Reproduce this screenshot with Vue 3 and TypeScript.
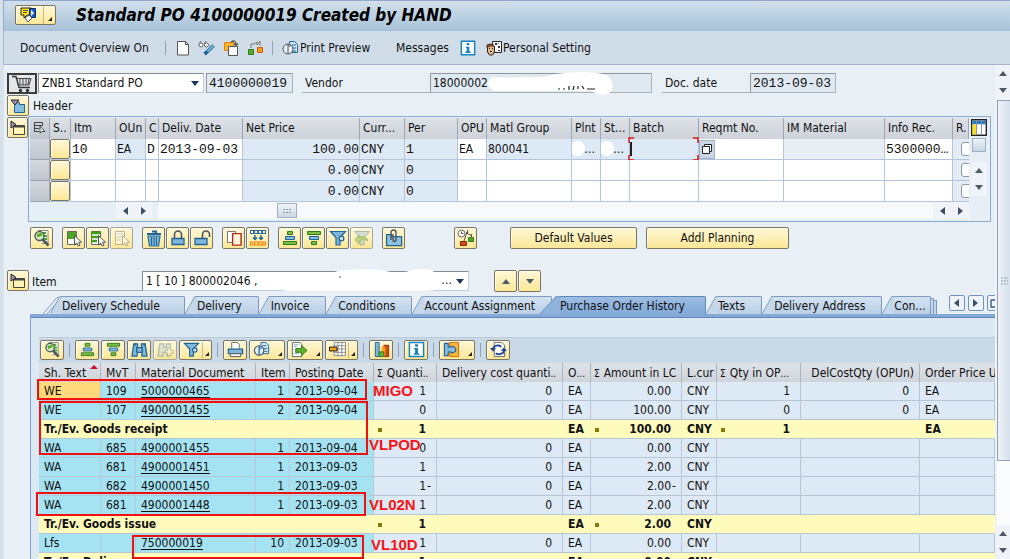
<script setup lang="ts">
import { ref } from 'vue'

interface Tool { icon: string; label: string; menu?: boolean; wide?: boolean; off?: boolean }
interface Cell { text?: string; kind: string }
interface HistoryRow {
  text: string; mvt: string; doc: string; item: string; date: string
  qty: string; cost: string; unit: string; amount: string; cur: string
  opu: string; dcq: string; price: string
}
interface SumRow { sum: true; text: string; qty: string; unit: string; amount: string; cur: string; opu: string; price: string }

const docType = ref('ZNB1 Standard PO')
const docNumber = ref('4100000019')
const vendor = ref('18000002')
const docDate = ref('2013-09-03')

const itemCols = [
  { key: 's', label: 'S..' }, { key: 'itm', label: 'Itm' }, { key: 'oun', label: 'OUn' }, { key: 'c', label: 'C' },
  { key: 'date', label: 'Deliv. Date' }, { key: 'net', label: 'Net Price' }, { key: 'curr', label: 'Curr...' },
  { key: 'per', label: 'Per' }, { key: 'opu', label: 'OPU' }, { key: 'matl', label: 'Matl Group' },
  { key: 'plnt', label: 'Plnt' }, { key: 'st', label: 'St...' }, { key: 'batch', label: 'Batch' },
  { key: 'req', label: 'Reqmt No.' }, { key: 'im', label: 'IM Material' }, { key: 'info', label: 'Info Rec.' },
  { key: 'r', label: 'R.' },
]
const emptyRow = (): Cell[] => [
  { kind: 'status' }, { kind: 'edit' }, { kind: 'edit' }, { kind: 'edit' }, { kind: 'edit' },
  { kind: 'read num', text: '0.00' }, { kind: 'read mono', text: 'CNY' }, { kind: 'read mono', text: '0' },
  { kind: 'edit' }, { kind: 'edit' }, { kind: 'edit' }, { kind: 'edit' }, { kind: 'edit' }, { kind: 'edit' },
  { kind: 'edit' }, { kind: 'edit' }, { kind: 'check' },
]
const itemRows: Cell[][] = [
  [
    { kind: 'status' }, { kind: 'edit mono', text: '10' }, { kind: 'read', text: 'EA' }, { kind: 'edit mono', text: 'D' },
    { kind: 'edit mono', text: '2013-09-03' }, { kind: 'read num', text: '100.00' }, { kind: 'read mono', text: 'CNY' },
    { kind: 'read mono', text: '1' }, { kind: 'edit', text: 'EA' }, { kind: 'read', text: '800041' },
    { kind: 'read smudge', text: '…' }, { kind: 'read smudge', text: '…' }, { kind: 'read focus' },
    { kind: 'help' }, { kind: 'read pale' }, { kind: 'edit mono', text: '5300000…' }, { kind: 'check' },
  ],
  emptyRow(),
  emptyRow(),
]

const itemTools: Tool[][] = [
  [{ icon: 'detail', label: 'Details' }],
  [{ icon: 'selall', label: 'Select all' }, { icon: 'selblock', label: 'Select block' }, { icon: 'desel', label: 'Deselect', off: true }],
  [{ icon: 'trash', label: 'Delete' }, { icon: 'lock', label: 'Lock' }, { icon: 'unlock', label: 'Unlock' }],
  [{ icon: 'copy', label: 'Copy' }, { icon: 'insert', label: 'Insert' }],
  [{ icon: 'asc', label: 'Sort ascending' }, { icon: 'desc', label: 'Sort descending' }, { icon: 'filter', label: 'Filter' }, { icon: 'unfilter', label: 'Remove filter', off: true }],
  [{ icon: 'attach', label: 'Attachments' }],
]
const historyTools: Tool[][] = [
  [{ icon: 'detail', label: 'Details' }],
  [{ icon: 'asc', label: 'Sort ascending' }, { icon: 'desc', label: 'Sort descending' }, { icon: 'find', label: 'Find' }, { icon: 'findnext', label: 'Find next', off: true }, { icon: 'filter', label: 'Filter', menu: true }],
  [{ icon: 'print', label: 'Print' }, { icon: 'view', label: 'Views', menu: true, wide: true }, { icon: 'export', label: 'Export', menu: true, wide: true }, { icon: 'layout', label: 'Layout', menu: true }],
  [{ icon: 'chart', label: 'Graphic' }],
  [{ icon: 'info', label: 'Information' }],
  [{ icon: 'plug', label: 'Services', menu: true, wide: true }],
  [{ icon: 'refresh', label: 'Refresh' }],
]

const tabs = ['Delivery Schedule', 'Delivery', 'Invoice', 'Conditions', 'Account Assignment', 'Purchase Order History', 'Texts', 'Delivery Address', 'Con...']
const activeTab = ref('Purchase Order History')

const r = (text: string, mvt: string, doc: string, item: string, date: string, qty: string, amount: string, opu = '', dcq = '', price = ''): HistoryRow =>
  ({ text, mvt, doc, item, date, qty, cost: '0', unit: 'EA', amount, cur: 'CNY', opu, dcq, price })

const history: (HistoryRow | SumRow)[] = [
  r('WE', '109', '5000000465', '1', '2013-09-04', '1', '0.00', '1', '0', 'EA'),
  r('WE', '107', '4900001455', '2', '2013-09-04', '0', '100.00', '0', '0', 'EA'),
  { sum: true, text: 'Tr./Ev. Goods receipt', qty: '1', unit: 'EA', amount: '100.00', cur: 'CNY', opu: '1', price: 'EA' },
  r('WA', '685', '4900001455', '1', '2013-09-04', '0', '0.00'),
  r('WA', '681', '4900001451', '1', '2013-09-03', '1', '2.00'),
  r('WA', '682', '4900001450', '1', '2013-09-03', '1-', '2.00-'),
  r('WA', '681', '4900001448', '1', '2013-09-03', '1', '2.00'),
  { sum: true, text: 'Tr./Ev. Goods issue', qty: '1', unit: 'EA', amount: '2.00', cur: 'CNY', opu: '', price: '' },
  r('Lfs', '', '750000019', '10', '2013-09-03', '1', '0.00'),
  { sum: true, text: 'Tr./Ev. Delivery note', qty: '1', unit: 'EA', amount: '0.00', cur: 'CNY', opu: '', price: '' },
]
const digits = (v: string) => v.replace('-', '')
const sign = (v: string) => (v.endsWith('-') ? '-' : '')
</script>

<template>
  <div class="window">
    <svg class="sprite" aria-hidden="true">
      <symbol id="i-detail" viewBox="0 0 18 18"><path d="M5 1.500h10v13h-6" fill="#fff" stroke="#8a8a7a"/><path d="M9 4h4M9 7h5M10 10h4M11 13h3" stroke="#48a51c" stroke-width="2"/><circle cx="6.500" cy="7" r="4.500" fill="#d9efc6" stroke="#4f5960" stroke-width="1.400"/><path d="M4 7l5-2" stroke="#58ac27" stroke-width="3"/><path d="M9.500 10.500l6 6" stroke="#4f5960" stroke-width="2.600"/></symbol>
      <symbol id="i-selall" viewBox="0 0 18 18"><path d="M2.500 2.500h9v13h-9z" fill="#fff" stroke="#666"/><path d="M3 3h8v7h-8z" fill="#4da525"/><path d="M9.500 6.500v9.500l2.300-2 1.500 3 1.700-.8-1.400-3h3z" fill="#fff" stroke="#555"/></symbol>
      <symbol id="i-selblock" viewBox="0 0 18 18"><path d="M2.500 2.500h9v13h-9z" fill="#fff" stroke="#666"/><path d="M2 4h10M2 8h8M2 12h6" stroke="#3f9d1c" stroke-width="2.400"/><path d="M9.500 6.500v9.500l2.300-2 1.500 3 1.700-.8-1.400-3h3z" fill="#fff" stroke="#555"/></symbol>
      <symbol id="i-desel" viewBox="0 0 18 18"><path d="M2.500 2.500h9v13h-9z" fill="#fff" stroke="#777"/><path d="M4 5h6M4 8h5M4 11h4" stroke="#999"/><path d="M9.500 6.500v9.500l2.300-2 1.500 3 1.700-.8-1.400-3h3z" fill="#fff" stroke="#777"/></symbol>
      <symbol id="i-trash" viewBox="0 0 18 18"><path d="M3 7h12l-1.500 10h-9z" fill="#8fc1e0" stroke="#1f6697" stroke-width="1.200"/><path d="M2 5h14M7 2.500h4v2" fill="none" stroke="#1f6697" stroke-width="2"/><path d="M6.500 8v8M9 8v8M11.500 8v8" stroke="#1f6697" stroke-width="1.200"/></symbol>
      <symbol id="i-lock" viewBox="0 0 18 18"><path d="M5.500 9V5.500a3.500 3.500 0 0 1 7 0V9" fill="none" stroke="#4c555b" stroke-width="1.600"/><path d="M3 9.500h12v6h-12z" fill="#7fb6da" stroke="#1f6697" stroke-width="1.300"/></symbol>
      <symbol id="i-unlock" viewBox="0 0 18 18"><path d="M9.500 9V5.500a3.500 3.500 0 0 1 7 0V8" fill="none" stroke="#4c555b" stroke-width="1.600"/><path d="M2 9.500h12v6h-12z" fill="#7fb6da" stroke="#1f6697" stroke-width="1.300"/></symbol>
      <symbol id="i-copy" viewBox="0 0 18 18"><path d="M2.500 2.500h8v11h-8z" fill="#fff" stroke="#777"/><path d="M7.600 4.600h8.500v11.500h-8.500z" fill="#fff4dc" stroke="#b02c17" stroke-width="1.400"/></symbol>
      <symbol id="i-insert" viewBox="0 0 18 18"><path d="M1 1h16v4h-16z" fill="#2f6c9c"/><path d="M2 3h15" stroke="#fff" stroke-width="2" stroke-dasharray="2 2"/><path d="M6 6v5M12 6v5M4 8.500l2 2 2-2M10 8.500l2 2 2-2" fill="none" stroke="#1f6697" stroke-width="1.400"/><path d="M1 12.500h16v4h-16z" fill="#ee7d10"/><path d="M2 14.500h14" stroke="#ffd668" stroke-width="2" stroke-dasharray="3 1"/></symbol>
      <symbol id="i-asc" viewBox="0 0 18 18"><path d="M6.500 2.500h5v3h-5z" fill="#78bf43" stroke="#317d1c"/><path d="M4.500 7.500h9v3h-9z" fill="#82bce0" stroke="#1f6697"/><path d="M2.500 12.500h13v3h-13z" fill="#78bf43" stroke="#317d1c"/></symbol>
      <symbol id="i-desc" viewBox="0 0 18 18"><path d="M2.500 2.500h13v3h-13z" fill="#78bf43" stroke="#317d1c"/><path d="M4.500 7.500h9v3h-9z" fill="#82bce0" stroke="#1f6697"/><path d="M6.500 12.500h5v3h-5z" fill="#78bf43" stroke="#317d1c"/></symbol>
      <symbol id="i-filter" viewBox="0 0 18 18"><path d="M1.500 2.500h15l-5.500 6v7.500h-4v-7.500z" fill="#7fb6da" stroke="#1f6697" stroke-width="1.200"/><circle cx="12.500" cy="9.500" r="2.300" fill="#dbeaf4" stroke="#1f6697" stroke-width="1.300"/></symbol>
      <symbol id="i-unfilter" viewBox="0 0 18 18"><path d="M1.500 2.500h15l-5.500 6v7.500h-4v-7.500z" fill="#a8c7dc" stroke="#52819f"/><path d="M2 11l4-5v3c4-3 8-1 9 3-3-2-6-2-9 0v3z" fill="#84b65b" stroke="#4b8731"/></symbol>
      <symbol id="i-attach" viewBox="0 0 18 18"><path d="M1.600 5.600h5v2h10v9h-15z" fill="#8fc1e0" stroke="#1f6697" stroke-width="1.300"/><path d="M6 11V3.500a2.500 2.500 0 0 1 5 0V11a1.500 1.500 0 0 1-3 0V5" fill="none" stroke="#4c555b" stroke-width="1.400"/></symbol>
      <symbol id="i-balance" viewBox="0 0 18 18"><circle cx="4.500" cy="4.500" r="3.500" fill="#fff" stroke="#666"/><path d="M4.500 2.500v2h2M9 3.500l5 3M14.500 5v4M10 3l-3 9M10.500 1v4" fill="none" stroke="#555"/><path d="M11.500 8.500h5v4h-5z" fill="#4da525" stroke="#317d1c"/><path d="M3.500 12.500h6v4h-6z" fill="#d34a16" stroke="#94290d"/></symbol>
      <symbol id="i-find" viewBox="0 0 18 18"><path d="M3 3h4v4h4V3h4l2 13h-5.500v-4h-5v4H1z" fill="#7fb6da" stroke="#1f6697" stroke-width="1.300"/><path d="M6 6v6M12 6v6M4 2v3M14 2v3" stroke="#1f6697" stroke-width="1.500"/></symbol>
      <symbol id="i-findnext" viewBox="0 0 18 18"><path d="M3 3h4v4h3V3h4v13h-3.500v-4h-4v4H1z" fill="#c2d5df" stroke="#648ba3" stroke-width="1.300"/><path d="M13 7v9M8.500 11.500h9" stroke="#78916f" stroke-width="4"/><path d="M13 8v7M9.500 11.500h7" stroke="#fff" stroke-width="2"/></symbol>
      <symbol id="i-print" viewBox="0 0 18 18"><path d="M5 8V1.500h6l2 2V8" fill="#fff" stroke="#5c6970"/><path d="M1.500 8.500h15v5h-15z" fill="#7fb6da" stroke="#1f6697" stroke-width="1.300"/><path d="M3.500 13.500h11v3h-11z" fill="#fff" stroke="#4c555b"/></symbol>
      <symbol id="i-view" viewBox="0 0 18 18"><path d="M8.500 1.500h5l3 3v9h-8z" fill="#d2e7f5" stroke="#1f6697"/><path d="M10 5h4M11 8h4M12 11h3" stroke="#1f6697"/><circle cx="6.500" cy="10" r="5" fill="#e6f0f6" stroke="#4c555b" stroke-width="1.200"/><path d="M6.500 5v10M6.500 7.500h3" stroke="#2575a9" stroke-width="1.500"/></symbol>
      <symbol id="i-export" viewBox="0 0 18 18"><path d="M1.500 1.500h8l2 2v13h-10z" fill="#fff" stroke="#5c6970"/><path d="M3 4h5M3 6h3M3 13h5" stroke="#8ba0ad"/><path d="M5 8h6V4.500l6 5.500-6 5.500V12H5z" fill="#61b02b" stroke="#317d1c"/></symbol>
      <symbol id="i-layout" viewBox="0 0 18 18"><path d="M5.500 1.500h12v14h-12z" fill="#fff" stroke="#8a8a8a"/><path d="M9.500 1v15M13.500 1v15M5 5h13M5 8.500h13M5 12h13" stroke="#8a8a8a"/><path d="M.5 6.500h8v4h-8z" fill="#f7a51b" stroke="#111"/></symbol>
      <symbol id="i-chart" viewBox="0 0 18 18"><path d="M2.500 1.500h4v15h-4z" fill="#7fb6da" stroke="#1f6697"/><path d="M11.500 4.500h5v12h-5z" fill="#d94817" stroke="#942d0b"/><path d="M9 6h4v10h-4z" fill="#f3ab18"/><path d="M6.500 11.500h5v5h-5z" fill="#66ae38" stroke="#317d1c"/></symbol>
      <symbol id="i-info" viewBox="0 0 18 18"><path d="M1.500 1.500h15v15h-15z" fill="#fff" stroke="#1583bd" stroke-width="1.600"/><path d="M7.500 3.500h3v2.500h-3zM6.500 7.500h4v5.500h1.500v1.500h-6v-1.500h1.500v-4h-1z" fill="#1583bd"/></symbol>
      <symbol id="i-plug" viewBox="0 0 18 18"><path d="M7 1.500h9.500v15H7v-4h4v-7H7z" fill="#f9b33a" stroke="#c96d0a"/><path d="M1.500 2.500h4v4h2c4-2 6 1 6 3s-3 4-6 2h-2v4h-4z" fill="#83bddf" stroke="#1f6697" stroke-width="1.200"/></symbol>
      <symbol id="i-refresh" viewBox="0 0 18 18"><path d="M4.500 1.500h8l3 3v12h-11z" fill="#fff" stroke="#666"/><path d="M3 8a5.500 4.500 0 0 1 9-2M15 10a5.500 4.500 0 0 1-9 3" fill="none" stroke="#24479b" stroke-width="2"/><path d="M0 7.500h6.500l-3.300 4zM18 10.500h-6.500l3.300-4z" fill="#24479b"/></symbol>
      <symbol id="i-open" viewBox="0 0 16 16"><path d="M3.500 5.500h11v9h-11z" fill="#fff3b8" stroke="#444"/><path d="M3 6.500h12" stroke="#444" stroke-width="2"/><path d="M1 1l5 3.500-5 3.500z" fill="#a891b5" stroke="#222"/></symbol>
    </svg>

    <header class="titlebar">
      <button class="btn menu-btn" aria-label="Services for object">
        <svg width="18" height="16" viewBox="0 0 18 16"><path d="M2 1h10v7H8l-3 3V8H2z" fill="#ffe51a" stroke="#222"/><path d="M4 3.500h5M4 5.500h4" stroke="#555"/><path d="M10.500 1.500h6v9h-6z" fill="#1c5fc2" stroke="#0b2d70"/><path d="M12 3l3 3-3 3z" fill="#fff"/><path d="M6 11l4-3 3 3-4 4z" fill="#fff" stroke="#555"/></svg>
        <i class="split"></i><i class="corner"></i>
      </button>
      <h1>Standard PO 4100000019 Created by HAND</h1>
    </header>

    <nav class="appbar">
      <button class="flat overview">Document Overview On</button>
      <i class="bar"></i>
      <button class="flat ic" aria-label="Create"><svg width="16" height="16" viewBox="0 0 16 16"><path d="M2.500 1.500h8l3 3v10.500h-11z" fill="#fff" stroke="#555"/><path d="M10.500 1.500v3h3" fill="none" stroke="#555"/></svg></button>
      <button class="flat ic" aria-label="Display/Change"><svg width="18" height="16" viewBox="0 0 18 16"><path d="M1 4l2-3M6 4l2-3" stroke="#666" fill="none"/><circle cx="3" cy="5" r="2" fill="#fff" stroke="#666"/><circle cx="8.500" cy="5" r="2" fill="#fff" stroke="#666"/><path d="M15.500 5.500l-7 7-2 1.500" stroke="#1d5f91" stroke-width="3.500"/><path d="M15.500 5.500l-6 6" stroke="#74b6e2" stroke-width="2"/></svg></button>
      <button class="flat ic" aria-label="Other purchase order"><svg width="16" height="16" viewBox="0 0 16 16"><path d="M1.500 2.500h9v8h-9z" fill="#fbb62c" stroke="#dd8410"/><path d="M5.500 6.500h9v9h-9z" fill="#fff" stroke="#555"/><path d="M8 2c3-2 5-1 5 3M11 3.500l2 2 2-2" fill="none" stroke="#555" stroke-width="1.300"/></svg></button>
      <button class="flat ic" aria-label="Check"><svg width="16" height="16" viewBox="0 0 16 16"><path d="M1.500 9.500h5v5h-5z" fill="#56aa30" stroke="#317d1c"/><path d="M10.500 7.500h5v5h-5z" fill="#f79a1d" stroke="#cf6507"/><path d="M4 8V4h3l3-2v3l3-4v5" fill="none" stroke="#777"/></svg></button>
      <i class="bar"></i>
      <button class="flat preview"><svg width="17" height="16" viewBox="0 0 17 16"><path d="M7.500 1.500h5l3 3v8h-8z" fill="#d2e7f5" stroke="#1f6697"/><path d="M10 5h4M10 8h4M10 11h4" stroke="#1f6697"/><circle cx="6" cy="9" r="5" fill="#e6f0f6" stroke="#4c555b"/><path d="M6 4v10M6 6h3" stroke="#555"/></svg>Print Preview</button>
      <button class="flat messages">Messages</button>
      <button class="flat ic" aria-label="Help"><svg width="16" height="16"><use href="#i-info" /></svg></button>
      <button class="flat personal"><svg width="16" height="16" viewBox="0 0 16 16"><path d="M6.500 1.500h9v11h-9z" fill="#fff" stroke="#222"/><path d="M9 3h2v2H9zM12 6h2v2h-2zM12 3h1v1h-1zM12 10h2v1h-2z" fill="#333"/><path d="M1.500 6h7v6l-2 3h-3l-2-3z" fill="#e5b88b" stroke="#222"/><path d="M1 8V5l3-1 4 1" fill="#8a5429" stroke="#4b2b15"/><path d="M3 8.500h1M6 8.500h1M4 11.500h2" stroke="#222"/></svg>Personal Setting</button>
    </nav>

    <div class="body">
      <main class="content">
        <section class="docline">
          <span class="cart"><svg width="22" height="18" viewBox="0 0 22 18"><path d="M1 1.500h4l3 11h11" fill="none" stroke="#333" stroke-width="1.500"/><path d="M5 3.500h15l-2 6.500H7M9 3.500v6.500M12 3.500v6.500M15 3.500v6.500M18 3.500l-1 6.500" fill="none" stroke="#444"/><circle cx="9.500" cy="15.500" r="1.700" fill="#333"/><circle cx="16.500" cy="15.500" r="1.700" fill="#333"/></svg></span>
          <span class="pick doctype">
            <select v-model="docType" aria-label="Document type"><option>ZNB1 Standard PO</option></select>
            <i class="tri down"></i>
          </span>
          <input v-model="docNumber" class="field mono number" aria-label="Document number" readonly />
          <label class="cap vendor-cap" for="vendor">Vendor</label>
          <span class="vendor-wrap">
            <input id="vendor" v-model="vendor" class="field" readonly />
            <svg class="blot" width="130" height="24" viewBox="0 0 130 24"><path d="M6 5C20 6 48 5 58 5C70 0 100-1 116 2C128 5 128 20 120 22C113 24 108 21 105 19H10C-1 18-1 7 6 5z" fill="#fff"/><path d="M71 17h2M76 17h2M82 14v4M87 14l-1 4M91 14v3M95 14l2 3M100 17h8" stroke="#222" stroke-width="1.200"/></svg>
          </span>
          <label class="cap date-cap" for="docdate">Doc. date</label>
          <input id="docdate" v-model="docDate" class="field mono date" readonly />
        </section>

        <section class="headrow">
          <button class="btn toggle" aria-label="Expand header"><svg width="16" height="16" viewBox="0 0 16 16"><path d="M4.500 7.500V4.500h5v2h5v8h-10z" fill="#84bde0" stroke="#1f6697"/><path d="M1 2h8L5 7z" fill="#a891b5" stroke="#222"/></svg></button>
          <span>Header</span>
        </section>

        <section class="overview-row">
          <button class="btn toggle" aria-label="Collapse item overview"><svg width="16" height="16"><use href="#i-open" /></svg></button>
          <div class="grid-panel">
            <div class="grid-main">
              <table class="items">
                <colgroup><col class="c-mark" /><col v-for="c in itemCols" :key="c.key" :class="'c-' + c.key" /></colgroup>
                <thead>
                  <tr>
                    <th class="mark"><svg width="14" height="14" viewBox="0 0 14 14"><path d="M2 1.500h8.500v3H2M2 4.500h7M2 7.500h5M2 10.500h5M2.500 1v10" stroke="#444" fill="none"/><path d="M8 5v7l2-1.500h3z" fill="#fff" stroke="#444"/></svg></th>
                    <th v-for="c in itemCols" :key="c.key">{{ c.label }}</th>
                  </tr>
                </thead>
                <tbody>
                  <tr v-for="(row, i) in itemRows" :key="i">
                    <td class="mark"></td>
                    <td v-for="(cell, j) in row" :key="j" :class="cell.kind">
                      <button v-if="cell.kind === 'status'" class="btn status-btn" :aria-label="'Status of line ' + (i + 1)"></button>
                      <input v-else-if="cell.kind === 'check'" type="checkbox" class="box" :aria-label="'Returns item, line ' + (i + 1)" />
                      <button v-else-if="cell.kind === 'help'" class="f4" aria-label="Choose requirement number"><svg width="12" height="12" viewBox="0 0 12 12"><path d="M3.500 1.500h7v7h-7z" fill="#fff" stroke="#222"/><path d="M1.500 3.500h7v7h-7z" fill="#fff" stroke="#222"/></svg></button>
                      <template v-else-if="cell.kind === 'read smudge'"><i class="dab"></i><span>{{ cell.text }}</span></template>
                      <template v-else>
                        <input :value="cell.text" :aria-label="itemCols[j].label + ', line ' + (i + 1)" :readonly="cell.kind.startsWith('read')" />
                        <svg v-if="cell.kind === 'read focus'" class="frame" viewBox="0 0 71 24"><path d="M6 1H1v5M1 18v5h5M65 1h5v5M70 18v5h-5" fill="none" stroke="#e01515" stroke-width="1.500"/><path d="M3 5v14" stroke="#222" stroke-width="2"/></svg>
                      </template>
                    </td>
                  </tr>
                </tbody>
              </table>
              <div class="hscroll">
                <button class="arrow" aria-label="Scroll left"><i class="tri left"></i></button>
                <button class="arrow" aria-label="Scroll left one column"><i class="tri right"></i></button>
                <div class="track"><span class="hthumb"><svg width="8" height="6" viewBox="0 0 8 6"><path d="M0 1.500h8M0 4.500h8" stroke="#8b99a8" stroke-dasharray="2 1"/></svg></span></div>
                <button class="arrow" aria-label="Scroll right one column"><i class="tri left"></i></button>
                <button class="arrow" aria-label="Scroll right"><i class="tri right"></i></button>
              </div>
            </div>
            <div class="grid-side">
              <button class="config" aria-label="Table settings"><svg width="16" height="17" viewBox="0 0 16 17"><path d="M.7.700h14.600v15.600H.7z" fill="#fff" stroke="#222" stroke-width="1.400"/><path d="M1.400 3.500h13.200" stroke="#2a77bd" stroke-width="3.500"/><path d="M3.500 5.500v10" stroke="#f7e21c" stroke-width="4"/><path d="M5.500 2v14M10.500 2v14" stroke="#8a949c"/></svg></button>
              <i class="vmini"></i>
              <button class="arrow" aria-label="Scroll up"><i class="tri up"></i></button>
              <button class="arrow" aria-label="Scroll down"><i class="tri down grey"></i></button>
            </div>
          </div>
        </section>

        <section class="tools">
          <div v-for="(g, i) in itemTools" :key="i" class="group">
            <button v-for="t in g" :key="t.icon" class="btn tool" :class="{ off: t.off }" :aria-label="t.label"><svg width="18" height="18"><use :href="'#i-' + t.icon" /></svg></button>
          </div>
          <div class="group lone"><button class="btn tool" aria-label="Account balance"><svg width="18" height="18"><use href="#i-balance" /></svg></button></div>
          <button class="btn text-btn defaults">Default Values</button>
          <button class="btn text-btn planning">Addl Planning</button>
        </section>

        <section class="itemline">
          <button class="btn toggle" aria-label="Collapse item"><svg width="16" height="16"><use href="#i-open" /></svg></button>
          <label class="cap item-cap" for="item">Item</label>
          <span class="pick item-pick">
            <select id="item"><option>1 [ 10 ] 800002046 ,</option></select>
            <svg class="blot" width="176" height="24" viewBox="0 0 176 24"><path d="M2 6C40 4 58 5 65 2C85-1 110 0 121 4C135 5 140-2 152 0C165 0 160 8 170 10C172 20 166 22 150 22H15C0 21-3 12 2 6z" fill="#fff"/><path d="M67 7v2" stroke="#803a8f"/></svg>
            <span class="rest">…</span>
            <i class="tri down"></i>
          </span>
          <button class="btn tool step" aria-label="Previous item"><i class="tri up"></i></button>
          <button class="btn tool" aria-label="Next item"><i class="tri down grey"></i></button>
        </section>

        <div class="tabbar" role="tablist">
          <svg class="stack" width="18" height="18" viewBox="0 0 18 18"><path d="M0 18L14 1.500H18M4 18L17 3M8 18L18 6" fill="none" stroke="#7b9abf"/></svg>
          <button v-for="t in tabs" :key="t" class="tab" role="tab" :aria-selected="t === activeTab" :class="{ active: t === activeTab }" @click="activeTab = t">
            <svg class="slant" width="16" height="18" viewBox="0 0 16 18" preserveAspectRatio="none"><path class="fill" d="M0 18L13 0H16V18z"/><path class="edge" d="M0 18L13 .5H16"/></svg>
            <span class="face">{{ t }}</span>
          </button>
          <i class="leaf"></i><i class="leaf"></i>
          <span class="tabnav">
            <button aria-label="Previous tab"><i class="tri left"></i></button>
            <button aria-label="Next tab"><i class="tri right"></i></button>
            <button aria-label="Tab list"><svg width="10" height="10" viewBox="0 0 10 10"><path d="M1 2h4M1 2v7h9V3H5" fill="none" stroke="#3b5d86" stroke-width="1.400"/></svg></button>
          </span>
        </div>

        <section class="history-panel">
          <div class="history">
            <div class="alvbar">
              <template v-for="(g, i) in historyTools" :key="i">
                <i v-if="i" class="bar"></i>
                <div class="alv-group">
                  <button v-for="t in g" :key="t.icon" class="btn alv" :class="{ off: t.off, menu: t.menu, wide: t.wide }" :aria-label="t.label">
                    <svg width="17" height="17"><use :href="'#i-' + t.icon" /></svg>
                    <template v-if="t.menu"><i v-if="!t.wide" class="split"></i><i class="corner"></i></template>
                  </button>
                </div>
              </template>
            </div>
            <div class="sheet">
              <table class="po">
                <colgroup>
                  <col class="h-text" /><col class="h-mvt" /><col class="h-doc" /><col class="h-item" /><col class="h-date" /><col class="h-qty" /><col class="h-cost" />
                  <col class="h-unit" /><col class="h-amt" /><col class="h-cur" /><col class="h-opu" /><col class="h-dcq" /><col class="h-price" />
                </colgroup>
                <thead>
                  <tr>
                    <th class="sorted">Sh. Text</th><th>MvT</th><th>Material Document</th><th class="right">Item</th><th>Posting Date</th>
                    <th class="sigma"><small>Σ</small>Quanti<small>..</small></th><th>Delivery cost quanti<small>..</small></th><th>O<small>...</small></th>
                    <th class="sigma"><small>Σ</small>Amount in LC</th><th>L.cur</th><th class="sigma"><small>Σ</small>Qty in OP<small>...</small></th>
                    <th class="right">DelCostQty (OPUn)</th><th class="last">Order Price U</th>
                  </tr>
                </thead>
                <tbody>
                  <template v-for="(h, i) in history" :key="i">
                    <tr v-if="'sum' in h" class="sum">
                      <td colspan="5">{{ h.text }}</td>
                      <td class="num"><i class="dot"></i>{{ h.qty }}</td><td></td><td>{{ h.unit }}</td>
                      <td class="num"><i class="dot"></i>{{ h.amount }}</td><td>{{ h.cur }}</td>
                      <td class="num"><i v-if="h.opu" class="dot"></i>{{ h.opu }}</td><td></td><td>{{ h.price }}</td>
                    </tr>
                    <tr v-else>
                      <td class="key" :class="{ cursor: i === 0 }">{{ h.text }}</td><td class="key">{{ h.mvt }}</td>
                      <td class="key"><a href="#">{{ h.doc }}</a></td><td class="key right">{{ h.item }}</td><td class="key">{{ h.date }}</td>
                      <td class="num">{{ digits(h.qty) }}<b class="sign">{{ sign(h.qty) }}</b></td><td class="num">{{ h.cost }}</td><td>{{ h.unit }}</td>
                      <td class="num">{{ digits(h.amount) }}<b class="sign">{{ sign(h.amount) }}</b></td><td>{{ h.cur }}</td>
                      <td class="num">{{ h.opu }}</td><td class="num">{{ h.dcq }}</td><td>{{ h.price }}</td>
                    </tr>
                  </template>
                </tbody>
              </table>
              <i class="ring ring-migo"></i><i class="ring ring-vlpod"></i><i class="ring ring-vl02n"></i><i class="ring ring-vl10d"></i>
              <strong class="note note-migo">MIGO</strong><strong class="note note-vlpod">VLPOD</strong>
              <strong class="note note-vl02n">VL02N</strong><strong class="note note-vl10d">VL10D</strong>
            </div>
          </div>
        </section>
      </main>

      <aside class="vscroll">
        <button class="arrow" aria-label="Page up"><i class="tri up"></i></button>
        <button class="arrow" aria-label="Line down"><i class="tri down grey"></i></button>
        <div class="vthumb"><svg width="7" height="8" viewBox="0 0 7 8"><path d="M1 0v8M4 0v8M7 0v8" stroke="#8b99a8" stroke-dasharray="2 1"/></svg></div>
        <div class="vtrack"></div>
        <button class="arrow" aria-label="Line up"><i class="tri up"></i></button>
        <button class="arrow" aria-label="Page down"><i class="tri down grey"></i></button>
      </aside>
    </div>
  </div>
</template>

<style>
body { margin: 0; overflow: hidden; }
</style>

<style scoped>
* { box-sizing: border-box; }
.window { height: 100vh; display: flex; flex-direction: column; overflow: hidden; border-left: 3px solid #d7e1ea; background: #e8f0f6; color: #111; font: 12px/16px "DejaVu Sans Condensed", "Noto Sans", sans-serif; }
.sprite { display: none; }
button, input, select { font: inherit; color: inherit; margin: 0; padding: 0; }
svg { display: block; flex: none; }
.mono { font-family: "Liberation Mono", monospace; font-size: 13px; }

.btn { display: flex; align-items: center; justify-content: center; flex: none; border: 1px solid #7b7561; border-radius: 2px; background: linear-gradient(#fff8d8, #fbe796); box-shadow: inset 1px 1px 0 #fffbe8; }
.btn.off { border-color: #aaa593; }
.btn.off svg { opacity: .5; }
.split { width: 1px; height: 16px; background: #c6b983; }
.corner { align-self: flex-end; margin: 0 3px 3px auto; border-left: 4px solid transparent; border-bottom: 4px solid #222; }
.tri { display: block; flex: none; width: 0; height: 0; border: 4px solid transparent; }
.tri.up { border-top: 0; border-bottom: 5px solid #4e5a66; }
.tri.down { border-bottom: 0; border-top: 5px solid #1e3560; }
.tri.grey { border-top-color: #4e5a66; }
.tri.left { border-left: 0; border-right: 5px solid #3d4f64; }
.tri.right { border-right: 0; border-left: 5px solid #3d4f64; }
.arrow { display: flex; align-items: center; justify-content: center; flex: none; width: 18px; height: 17px; border: 0; background: #f0f4f8; }
.bar { width: 1px; height: 14px; background: #8fa3b8; }

.titlebar { flex: none; display: flex; align-items: center; gap: 20px; height: 31px; padding: 0 11px 2px; border-top: 1px solid #8fa9cb; border-left: 1px solid #8fa9cb; background: linear-gradient(#d2e0eb, #a7c2d8); }
.menu-btn { width: 41px; height: 20px; padding-left: 3px; gap: 3px; }
.menu-btn .split { height: 18px; margin-left: 3px; }
h1 { margin: 0; font: italic bold 17px/22px "DejaVu Sans Condensed", "Noto Sans", sans-serif; color: #000; white-space: nowrap; }

.appbar { flex: none; display: flex; align-items: center; height: 34px; padding-left: 16px; border-left: 1px solid #a5b8ce; border-bottom: 1px solid #a3b6cc; background: #d0dde8; }
.flat { display: flex; align-items: center; gap: 1px; border: 0; background: none; white-space: nowrap; }
.overview { width: 145px; }
.appbar .ic { width: 24px; justify-content: center; }
.appbar .bar + .ic { margin-left: 5px; }
.appbar .ic + .bar { margin-left: 5px; }
.preview { width: 114px; margin-left: 9px; }
.messages { width: 52px; }
.messages + .ic { margin: 0 6px 0 8px; }

.body { flex: 1; min-height: 0; display: flex; }
.content { flex: 1; min-width: 0; overflow: hidden; border-left: 1px solid #dce5ed; padding: 8px 0 0 3px; }

.docline { display: flex; align-items: flex-start; height: 22px; }
.cart { display: flex; align-items: center; justify-content: center; width: 30px; height: 21px; border: 2px solid #3c3c3c; background: #e4e6e8; }
.pick { position: relative; display: flex; align-items: center; border: 1px solid #858c94; border-right-color: #c5ccd3; border-bottom-color: #c5ccd3; background: #fff; height: 20px; }
.pick select { flex: 1; width: 100%; height: 18px; padding: 0 18px 0 3px; border: 0; background: transparent; appearance: none; }
.pick .tri { position: absolute; right: 4px; }
.doctype { width: 166px; margin: 0 2px 0 1px; }
.field { height: 20px; padding: 0 2px; border: 1px solid #8f989f; border-right-color: #aab2b9; border-bottom-color: #aab2b9; background: #dfe9f2; border-radius: 0; }
.field.mono { font-size: 13px; }
.number { width: 87px; margin-right: 9px; }
.cap { height: 20px; padding: 2px 3px 0; border-bottom: 1px solid #a9b2bb; white-space: nowrap; }
.vendor-cap { width: 128px; }
.vendor-wrap { position: relative; width: 222px; margin-right: 10px; }
.vendor-wrap .field { width: 100%; }
.vendor-wrap .blot { position: absolute; left: 57px; top: -1px; }
.date-cap { width: 88px; }
.date { width: 86px; }

.headrow { display: flex; align-items: center; gap: 4px; height: 21px; }
.toggle { width: 22px; height: 21px; }
.overview-row { display: flex; align-items: flex-start; margin-right: 4px; }
.overview-row .toggle { width: 21px; margin-top: 1px; }
.grid-panel { flex: 1; min-width: 0; display: flex; padding: 1px 1px 2px; border: 1px solid #8aa9d0; background: #e6eff6; }
.grid-main { flex: 1; min-width: 0; }
.grid-side { width: 20px; display: flex; flex-direction: column; align-items: center; }
.config { width: 16px; height: 17px; margin-top: 1px; border: 0; background: none; }
.vmini { width: 14px; height: 14px; margin: 2px 0 10px; border: 1px solid #9fb0c4; background: linear-gradient(#edf2f8, #c9d5e3); }
.grid-side .arrow { width: 16px; }
.items, .po { width: 100%; table-layout: fixed; border-collapse: separate; border-spacing: 0; }
.items th { height: 21px; padding: 0 0 2px 3px; text-align: left; font-weight: normal; white-space: nowrap; overflow: hidden; border-right: 1px solid #9ba7b4; background: linear-gradient(#dde1e6, #ced3da); }
.items td { position: relative; height: 21px; padding: 0; border-right: 1px solid #b3c5da; border-bottom: 1px solid #b3c5da; background: #fff; overflow: hidden; }
.items td.focus, .items td.help { overflow: visible; }
.items .mark { background: linear-gradient(#d4d8de, #c0c6cf); border-color: #9aa3ae; }
.items th.mark { padding-left: 2px; }
.items td.read { background: #dde9f4; }
.items td.pale { background: #e7eff5; }
.items td.check { background: #e3ecf4; border-right: 0; }
.items td > input:not(.box) { display: block; width: 100%; height: 20px; padding: 0 0 0 1px; border: 0; border-radius: 0; background: transparent; outline: 0; }
.items td.mono, .items td.num { font-family: "Liberation Mono", monospace; font-size: 13px; }
.items td.num input { text-align: right; }
.status-btn { width: 20px; height: 20px; }
.box { display: block; width: 14px; height: 14px; margin-left: 8px; appearance: none; border: 1px solid #8f99a3; border-radius: 3px; background: #fff; }
.f4 { display: flex; align-items: center; justify-content: center; width: 16px; height: 19px; border: 1px solid #a5b1c1; background: #c9d6e6; }
.frame { position: absolute; left: -2px; top: -2px; width: 71px; height: 24px; }
.dab { position: absolute; left: -2px; top: 2px; width: 15px; height: 15px; border-radius: 50%; background: #fff; }
.smudge span { display: block; padding: 0 5px 0 0; text-align: right; }
.c-mark { width: 20px; } .c-s { width: 21px; } .c-itm { width: 45px; } .c-oun { width: 30px; } .c-c { width: 13px; } .c-date { width: 84px; }
.c-net { width: 117px; } .c-curr { width: 45px; } .c-per { width: 53px; } .c-opu { width: 29px; } .c-matl { width: 85px; } .c-plnt { width: 29px; }
.c-st { width: 29px; } .c-batch { width: 69px; } .c-req { width: 85px; } .c-im { width: 101px; } .c-info { width: 68px; }
.hscroll { display: flex; align-items: center; height: 17px; padding-left: 86px; }
.track { flex: 1; height: 17px; margin-left: 6px; background: #f7f9fb; display: flex; align-items: center; }
.hthumb { display: flex; align-items: center; justify-content: center; width: 20px; height: 15px; margin-left: 119px; border: 1px solid #9fb0c4; background: linear-gradient(#f0f4f9, #ccd8e5); }

.tools { display: flex; align-items: center; gap: 9px; padding: 5px 0 0 23px; }
.group { display: flex; gap: 1px; }
.tool { width: 23px; height: 22px; }
.lone { margin-left: 40px; }
.text-btn { height: 22px; }
.defaults { width: 127px; margin-left: 24px; }
.planning { width: 143px; }

.itemline { display: flex; align-items: flex-start; padding-top: 21px; height: 45px; }
.item-cap { width: 113px; height: 21px; padding-top: 4px; }
.item-pick { width: 327px; margin: 1px 25px 0 0; }
.item-pick .blot { position: absolute; left: 130px; top: -3px; }
.rest { position: absolute; right: 16px; top: 0; }
.step { margin-right: 1px; }

.tabbar { display: flex; align-items: flex-end; height: 19px; padding-left: 36px; margin-top: 1px; }
.stack { margin-right: -11px; }
.tab { position: relative; display: flex; flex: none; height: 18px; border: 0; background: none; white-space: nowrap; }
.slant { width: 12px; height: 18px; }
.slant .fill { fill: #c5d8ea; }
.slant .edge { fill: none; stroke: #7b9abf; }
.face { height: 18px; padding: 1px 16px 0 0; border-top: 1px solid #7b9abf; border-right: 1px solid #7b9abf; border-radius: 0 2px 0 0; background: linear-gradient(#d3e2f0, #b9cfe5); }
.stack + .tab .face { padding-right: 24px; }
.active { margin-left: -12px; }
.active .slant { width: 20px; }
.active .slant .fill { fill: #8fb3dc; }
.active .face { background: linear-gradient(#9dbde2, #82aad8); border-color: #5e86b8; padding-right: 20px; }
.tab:last-of-type .face { padding-right: 4px; }
.leaf { flex: none; width: 3px; height: 16px; border: 1px solid #7b9abf; border-left: 0; border-bottom: 0; background: #c5d8ea; }
.leaf + .leaf { height: 14px; }
.tabnav { display: flex; gap: 3px; margin: 0 0 3px 12px; }
.tabnav button { display: flex; align-items: center; justify-content: center; flex: none; width: 16px; height: 16px; border: 1px solid #6f93bb; border-radius: 2px; background: #edf3f8; }

.history-panel { margin-left: 23px; border-left: 1px solid #7fa2cd; border-top: 3px solid #86aad7; box-shadow: inset 0 1px 0 #5f86b8; background: #dce8f2; padding: 20px 0 0 8px; }
.alvbar { display: flex; align-items: center; gap: 5px; height: 26px; padding: 0 0 2px 1px; background: #c9d9e8; border-top: 1px solid #bccbd9; }
.alv-group { display: flex; gap: 2px; }
.alv { width: 24px; height: 20px; }
.alv.menu { width: 33px; gap: 2px; padding-left: 3px; }
.alv.wide { width: 36px; }
.alv.menu .corner { margin: 0 2px 3px auto; }
.sheet { position: relative; }
.po th { height: 19px; padding: 2px 0 0 5px; text-align: left; font-weight: normal; white-space: nowrap; overflow: hidden; border-right: 1px solid #a9b5c1; background: linear-gradient(#dfe3e8, #cfd4db); line-height: 17px; }
.po th.last { border-right: 0; }
.po th small { font-size: 10px; line-height: 10px; }
.po th.sigma { padding-left: 3px; }
.sigma small:first-child { margin-right: 4px; }
.po th.right, .po td.right { text-align: right; padding-right: 5px; }
.sorted { position: relative; }
.sorted::after { content: ""; position: absolute; right: 2px; top: 2px; border: 4px solid transparent; border-top: 0; border-bottom-color: #c3122f; }
.po td { position: relative; height: 19px; padding: 0 0 0 5px; line-height: 18px; white-space: nowrap; overflow: hidden; border-right: 1px solid #b7c6d6; border-bottom: 1px solid #b7c6d6; background: #dde9f4; }
.po td.key { background: #a5e3f3; border-color: #b4c9d8; }
.po td.cursor { background: #ffd97c; }
.po td.num { padding-right: 10px; text-align: right; }
.po .sum td { background: #fffbbd; font-weight: bold; border-right-color: #fffbbd; }
.sign { display: inline-block; width: 5px; margin-right: -5px; font-weight: normal; }
.dot { position: absolute; left: 4px; top: 8px; width: 4px; height: 4px; background: #847a08; }
.po a { display: block; width: max-content; height: 16px; color: inherit; text-decoration: none; border-bottom: 1px solid #111; }
.h-text { width: 62px; } .h-mvt { width: 35px; } .h-doc { width: 120px; } .h-item { width: 34px; } .h-date { width: 84px; } .h-qty { width: 63px; }
.h-cost { width: 126px; } .h-unit { width: 28px; } .h-amt { width: 91px; } .h-cur { width: 35px; } .h-opu { width: 84px; } .h-dcq { width: 119px; }
.po td:has(a) { vertical-align: top; }
.ring { position: absolute; border: 2px solid #f01010; }
.ring-migo { left: -2px; top: 16px; width: 330px; height: 21px; }
.ring-vlpod { left: 0; top: 38px; width: 329px; height: 54px; }
.ring-vl02n { left: -3px; top: 129px; width: 330px; height: 24px; }
.ring-vl10d { left: 93px; top: 172px; width: 232px; height: 24px; }
.note { position: absolute; font: bold 15px/16px "Liberation Sans", sans-serif; color: #f81414; }
.note-migo { left: 334px; top: 20px; }
.note-vlpod { left: 330px; top: 74px; }
.note-vl02n { left: 330px; top: 134px; }
.note-vl10d { left: 332px; top: 174px; }

.vscroll { flex: none; width: 15px; display: flex; flex-direction: column; align-items: flex-end; background: #eef3f7; }
.vscroll .arrow { width: 14px; }
.vthumb { flex: 361; width: 13px; display: flex; align-items: center; justify-content: center; margin-top: 1px; border: 1px solid #8fa2b8; border-right: 0; background: linear-gradient(90deg, #eef3f8, #d5e0ec); }
.vtrack { flex: 64; width: 13px; background: #fbfcfd; }
</style>
